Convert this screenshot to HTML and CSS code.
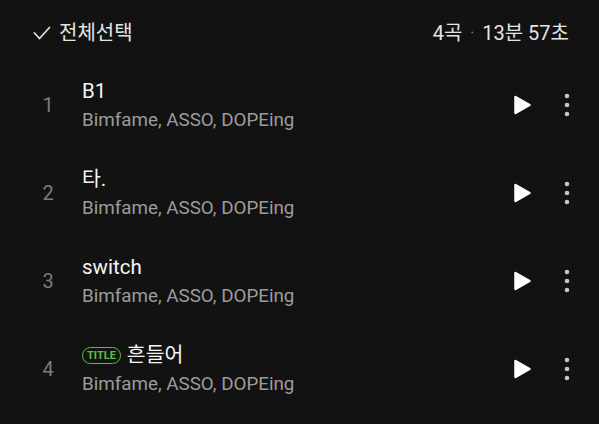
FILE: index.html
```html
<!DOCTYPE html>
<html lang="ko">
<head>
<meta charset="utf-8">
<link rel="stylesheet" href="styles.css">
</head>
<body>
<div class="page">
  <header class="head">
    <div class="select">
      <svg class="check" width="18" height="14" viewBox="0 0 18 14"><path d="M1.5 7 L6.5 12.5 L16.5 1.5" fill="none" stroke="#e2e2e2" stroke-width="1.7" stroke-linecap="round" stroke-linejoin="round"/></svg>
      <span class="select-label">전체선택</span>
    </div>
    <div class="summary"><span>4곡</span><span class="sep">·</span><span>13분 57초</span></div>
  </header>
  <ul class="list">
    <li class="row">
      <span class="num">1</span>
      <div class="info"><div class="title">B1</div><div class="artist">Bimfame, ASSO, DOPEing</div></div>
      <svg class="play" width="24" height="24" viewBox="0 0 24 24"><path d="M5.5 4 L19.5 12 L5.5 20 Z" fill="#fff" stroke="#fff" stroke-width="2.5" stroke-linejoin="round"/></svg>
      <svg class="more" width="24" height="24" viewBox="0 0 24 24"><circle cx="12" cy="3" r="2.3" fill="#c4c4c4"/><circle cx="12" cy="12" r="2.3" fill="#c4c4c4"/><circle cx="12" cy="21" r="2.3" fill="#c4c4c4"/></svg>
    </li>
    <li class="row">
      <span class="num">2</span>
      <div class="info"><div class="title">타.</div><div class="artist">Bimfame, ASSO, DOPEing</div></div>
      <svg class="play" width="24" height="24" viewBox="0 0 24 24"><path d="M5.5 4 L19.5 12 L5.5 20 Z" fill="#fff" stroke="#fff" stroke-width="2.5" stroke-linejoin="round"/></svg>
      <svg class="more" width="24" height="24" viewBox="0 0 24 24"><circle cx="12" cy="3" r="2.3" fill="#c4c4c4"/><circle cx="12" cy="12" r="2.3" fill="#c4c4c4"/><circle cx="12" cy="21" r="2.3" fill="#c4c4c4"/></svg>
    </li>
    <li class="row">
      <span class="num">3</span>
      <div class="info"><div class="title">switch</div><div class="artist">Bimfame, ASSO, DOPEing</div></div>
      <svg class="play" width="24" height="24" viewBox="0 0 24 24"><path d="M5.5 4 L19.5 12 L5.5 20 Z" fill="#fff" stroke="#fff" stroke-width="2.5" stroke-linejoin="round"/></svg>
      <svg class="more" width="24" height="24" viewBox="0 0 24 24"><circle cx="12" cy="3" r="2.3" fill="#c4c4c4"/><circle cx="12" cy="12" r="2.3" fill="#c4c4c4"/><circle cx="12" cy="21" r="2.3" fill="#c4c4c4"/></svg>
    </li>
    <li class="row">
      <span class="num">4</span>
      <div class="info"><div class="title"><span class="badge">TITLE</span>흔들어</div><div class="artist">Bimfame, ASSO, DOPEing</div></div>
      <svg class="play" width="24" height="24" viewBox="0 0 24 24"><path d="M5.5 4 L19.5 12 L5.5 20 Z" fill="#fff" stroke="#fff" stroke-width="2.5" stroke-linejoin="round"/></svg>
      <svg class="more" width="24" height="24" viewBox="0 0 24 24"><circle cx="12" cy="3" r="2.3" fill="#c4c4c4"/><circle cx="12" cy="12" r="2.3" fill="#c4c4c4"/><circle cx="12" cy="21" r="2.3" fill="#c4c4c4"/></svg>
    </li>
  </ul>
</div>
</body>
</html>
```
FILE: styles.css
```css
html, body {
  margin: 0;
  padding: 0;
  background: #121212;
}
body {
  font-family: Roboto, "Noto Sans CJK KR", sans-serif;
  color: #f2f2f2;
  width: 599px;
  height: 424px;
  overflow: hidden;
}
.page {
  display: flex;
  flex-direction: column;
}
.head {
  height: 61px;
  display: flex;
  align-items: center;
  justify-content: space-between;
  padding: 5px 30px 0 33px;
  box-sizing: border-box;
}
.select {
  display: flex;
  align-items: center;
  gap: 8px;
}
.check {
  display: block;
}
.select-label {
  font-size: 20px;
  color: #e4e4e4;
  line-height: 24px;
}
.summary {
  font-size: 20px;
  color: #e4e4e4;
  line-height: 24px;
  display: flex;
  align-items: center;
}
.sep {
  color: #8a8a8a;
  margin: 0 8px;
  font-size: 15px;
}
.list {
  list-style: none;
  margin: 0;
  padding: 0;
}
.row {
  height: 88px;
  display: flex;
  align-items: center;
  padding: 0 20px 0 30px;
}
.num {
  width: 36px;
  text-align: center;
  font-size: 20px;
  color: #7c7c7c;
  margin-right: 16px;
}
.info {
  flex: 1;
  display: flex;
  flex-direction: column;
  gap: 2px;
}
.title {
  font-size: 20.5px;
  line-height: 28px;
  color: #f5f5f5;
  display: flex;
  align-items: center;
}
.artist {
  font-size: 18.8px;
  line-height: 26px;
  color: #9c9c9c;
}
.badge {
  display: inline-block;
  border: 1.6px solid #58c23f;
  color: #58c23f;
  border-radius: 10px;
  font-size: 11px;
  font-weight: 700;
  line-height: 15px;
  padding: 0 4px;
  margin-right: 6px;
}
.play {
  display: block;
  margin-right: 21px;
}
.more {
  display: block;
}
```
